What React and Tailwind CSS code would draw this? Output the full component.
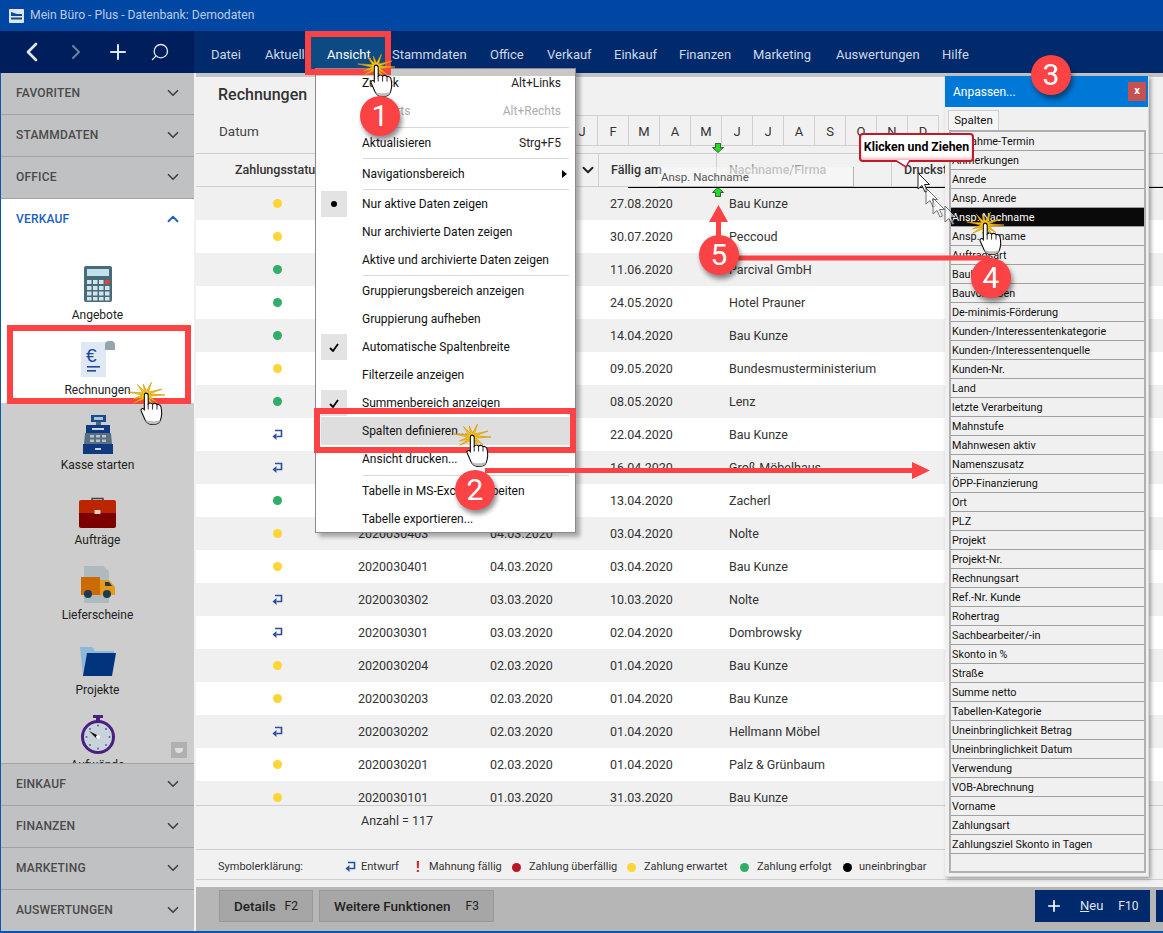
import React from "react";
import { ChevronDown, ChevronUp, ChevronLeft, ChevronRight, Plus, Search } from "lucide-react";

const navItems = [
    { label: "Datei", w: "w-[54px]" },
    { label: "Aktuell", w: "w-[62px]" },
    { label: "Ansicht", w: "w-[65px]", active: true },
    { label: "Stammdaten", w: "w-[98px]" },
    { label: "Office", w: "w-[57px]" },
    { label: "Verkauf", w: "w-[67px]" },
    { label: "Einkauf", w: "w-[65px]" },
    { label: "Finanzen", w: "w-[74px]" },
    { label: "Marketing", w: "w-[83px]" },
    { label: "Auswertungen", w: "w-[106px]" },
    { label: "Hilfe", w: "w-[40px]" },
];

const months = ["J", "F", "M", "A", "M", "J", "J", "A", "S", "O", "N", "D"];

const rows = [
    ["y", "2020080101", "28.07.2020", "27.08.2020", "Bau Kunze"],
    ["y", "2020060201", "30.06.2020", "30.07.2020", "Peccoud"],
    ["g", "2020050201", "12.05.2020", "11.06.2020", "Parcival GmbH"],
    ["g", "2020040701", "24.04.2020", "24.05.2020", "Hotel Prauner"],
    ["g", "2020040601", "15.04.2020", "14.04.2020", "Bau Kunze"],
    ["y", "2020040501", "09.04.2020", "09.05.2020", "Bundesmusterministerium"],
    ["g", "2020040401", "08.04.2020", "08.05.2020", "Lenz"],
    ["d", "2020040301", "23.03.2020", "22.04.2020", "Bau Kunze"],
    ["d", "2020040201", "17.03.2020", "16.04.2020", "Groß Möbelhaus"],
    ["g", "2020040101", "14.03.2020", "13.04.2020", "Zacherl"],
    ["y", "2020030403", "04.03.2020", "03.04.2020", "Nolte"],
    ["y", "2020030401", "04.03.2020", "03.04.2020", "Bau Kunze"],
    ["d", "2020030302", "03.03.2020", "10.03.2020", "Nolte"],
    ["d", "2020030301", "03.03.2020", "02.04.2020", "Dombrowsky"],
    ["y", "2020030204", "02.03.2020", "01.04.2020", "Bau Kunze"],
    ["y", "2020030203", "02.03.2020", "01.04.2020", "Bau Kunze"],
    ["d", "2020030202", "02.03.2020", "01.04.2020", "Hellmann Möbel"],
    ["y", "2020030201", "02.03.2020", "01.04.2020", "Palz & Grünbaum"],
    ["y", "2020030101", "01.03.2020", "31.03.2020", "Bau Kunze"],
];

const columns = [
    "Abnahme-Termin", "Anmerkungen", "Anrede", "Ansp. Anrede", "Ansp. Nachname", "Ansp. Vorname",
    "Auftragsart", "Baubeginn", "Bauvorhaben", "De-minimis-Förderung", "Kunden-/Interessentenkategorie",
    "Kunden-/Interessentenquelle", "Kunden-Nr.", "Land", "letzte Verarbeitung", "Mahnstufe",
    "Mahnwesen aktiv", "Namenszusatz", "ÖPP-Finanzierung", "Ort", "PLZ", "Projekt", "Projekt-Nr.",
    "Rechnungsart", "Ref.-Nr. Kunde", "Rohertrag", "Sachbearbeiter/-in", "Skonto in %", "Straße",
    "Summe netto", "Tabellen-Kategorie", "Uneinbringlichkeit Betrag", "Uneinbringlichkeit Datum",
    "Verwendung", "VOB-Abrechnung", "Vorname", "Zahlungsart", "Zahlungsziel Skonto in Tagen",
];

const Draft = () => (
    <svg width="11" height="12" viewBox="0 0 11 12">
        <path d="M3 1.5h6.5v6H4.5" fill="none" stroke="#2b4f9e" strokeWidth="1.6" />
        <path d="M0.5 7.5L4.5 4v7z" fill="#2b4f9e" />
    </svg>
);

const Dot = ({ color }) => <span className={`block w-[9px] h-[9px] rounded-full ${color}`} />;

const Status = ({ s }) => {
    if (s === "y") return <Dot color="bg-[#fdd535]" />;
    if (s === "g") return <Dot color="bg-[#2fae68]" />;
    return <Draft />;
};

const Calculator = () => (
    <svg width="28" height="36" viewBox="0 0 28 36">
        <rect width="28" height="36" rx="2" fill="#4a6a76" />
        <rect x="3" y="3" width="22" height="7" fill="#bfe0ef" />
        <rect x="3" y="14" width="4.5" height="4" fill="#cfe6f0" />
        <rect x="9" y="14" width="4.5" height="4" fill="#cfe6f0" />
        <rect x="15" y="14" width="4.5" height="4" fill="#cfe6f0" />
        <rect x="21" y="14" width="4.5" height="4" fill="#e8403c" />
        <rect x="3" y="20" width="4.5" height="4" fill="#cfe6f0" />
        <rect x="9" y="20" width="4.5" height="4" fill="#cfe6f0" />
        <rect x="15" y="20" width="4.5" height="4" fill="#cfe6f0" />
        <rect x="21" y="20" width="4.5" height="4" fill="#cfe6f0" />
        <rect x="3" y="25.5" width="4.5" height="4" fill="#cfe6f0" />
        <rect x="9" y="25.5" width="4.5" height="4" fill="#cfe6f0" />
        <rect x="15" y="25.5" width="4.5" height="4" fill="#cfe6f0" />
        <rect x="21" y="25.5" width="4.5" height="4" fill="#cfe6f0" />
        <rect x="3" y="31" width="4.5" height="3.5" fill="#cfe6f0" />
        <rect x="9" y="31" width="4.5" height="3.5" fill="#cfe6f0" />
        <rect x="15" y="31" width="4.5" height="3.5" fill="#cfe6f0" />
        <rect x="21" y="31" width="4.5" height="3.5" fill="#cfe6f0" />
    </svg>
);

const Invoice = () => (
    <svg width="34" height="36" viewBox="0 0 34 36">
        <path d="M0 1h25v35H0z" fill="#dfe8f4" />
        <path d="M24 9V4a4 4 0 0 1 4-4h2a4 4 0 0 1 4 4v5z" fill="#96a4ad" />
        <text x="5" y="21" fontSize="19" fontFamily="Liberation Sans" fill="#1d4a9c">€</text>
        <rect x="6" y="25" width="13" height="1.6" fill="#1d4a9c" />
        <rect x="6" y="29" width="9" height="1.6" fill="#1d4a9c" />
    </svg>
);

const Register = () => (
    <svg width="32" height="39" viewBox="0 0 32 39">
        <rect x="9" y="0" width="15" height="7" fill="#1d4a8c" />
        <rect x="12" y="2" width="9" height="3" fill="#a8c4dc" />
        <rect x="14" y="7" width="5" height="3" fill="#4a6a76" />
        <rect x="4" y="10" width="24" height="8" fill="#0f3a80" />
        <rect x="10" y="13" width="12" height="2" fill="#c8d4e0" />
        <path d="M3 18h26l1 11H2z" fill="#5a6f7d" />
        <rect x="8" y="20" width="4" height="2.5" fill="#b5c4ce" />
        <rect x="14" y="20" width="4" height="2.5" fill="#b5c4ce" />
        <rect x="20" y="20" width="4" height="2.5" fill="#b5c4ce" />
        <rect x="8" y="24.5" width="4" height="2.5" fill="#b5c4ce" />
        <rect x="14" y="24.5" width="4" height="2.5" fill="#b5c4ce" />
        <rect x="20" y="24.5" width="4" height="2.5" fill="#b5c4ce" />
        <rect x="1" y="29" width="30" height="10" fill="#0f3a80" />
        <rect x="13" y="33" width="6" height="2" fill="#c8d4e0" />
    </svg>
);

const Briefcase = () => (
    <svg width="37" height="31" viewBox="0 0 37 31">
        <path d="M13 4V1.5h11V4" fill="none" stroke="#444" strokeWidth="1.5" />
        <path d="M2 3h33a2 2 0 0 1 2 2v11H0V5a2 2 0 0 1 2-2z" fill="#bb2500" />
        <path d="M0 16h37v13a2 2 0 0 1-2 2H2a2 2 0 0 1-2-2z" fill="#7c0000" />
        <rect x="15.5" y="13" width="6" height="4" fill="#e6cfc0" />
    </svg>
);

const Truck = () => (
    <svg width="34" height="37" viewBox="0 0 34 37">
        <path d="M3 0h19l6 5v32H3z" fill="#aebac0" />
        <rect x="0" y="11" width="19" height="18" fill="#cc6a00" />
        <path d="M19 14h9l6 7v8H19z" fill="#e59a1a" />
        <path d="M24 16h4l3 4h-7z" fill="#26384a" />
        <circle cx="7" cy="28" r="4" fill="#1f3a4f" />
        <circle cx="26" cy="28" r="4" fill="#1f3a4f" />
    </svg>
);

const Folder = () => (
    <svg width="36" height="29" viewBox="0 0 36 29">
        <path d="M0 0h12l3 4h19v4H9L4 29H3z" fill="#8db8da" />
        <path d="M7 6h29l-4 23H3z" fill="#00347c" />
    </svg>
);

const Stopwatch = () => (
    <svg width="34" height="39" viewBox="0 0 34 39">
        <rect x="12" y="0" width="10" height="3" fill="#4a1f80" />
        <rect x="15" y="3" width="4" height="3" fill="#4a1f80" />
        <circle cx="17" cy="22" r="15.5" fill="#c8d3dc" stroke="#4a1f80" strokeWidth="3" />
        <g fill="#4f6f80">
            <circle cx="17" cy="10.5" r="1" />
            <circle cx="17" cy="33.5" r="1" />
            <circle cx="5.5" cy="22" r="1" />
            <circle cx="28.5" cy="22" r="1" />
            <circle cx="9" cy="14" r="1" />
            <circle cx="25" cy="14" r="1" />
            <circle cx="9" cy="30" r="1" />
            <circle cx="25" cy="30" r="1" />
        </g>
        <path d="M8 16l10 5-2 3z" fill="#111" />
        <circle cx="17" cy="22" r="2" fill="#fff" />
    </svg>
);

const SideSection = ({ label }) => (
    <div className="h-[42px] shrink-0 flex items-center justify-between pl-[15px] pr-[12px] pb-[2px] bg-[#c0c1c3] border-b border-[#a2a3a5] text-[12px] font-medium tracking-[0.2px] text-[#4a4a4a]">
        <span>{label}</span>
        <ChevronDown size={18} strokeWidth={2.2} className="text-[#404040]" />
    </div>
);

const SideItem = ({ icon, label, extra = "" }) => (
    <div className="h-[75px] flex flex-col items-center">
        <div className={`h-[48px] mt-[7px] flex items-center justify-center ${extra}`}>{icon}</div>
        <div className="text-[12px] leading-[14px] text-[#222]">{label}</div>
    </div>
);

const MenuItem = ({ label, right, mark, disabled, arrow, hot }) => (
    <div className={`h-[28px] flex items-center shrink-0 mx-[5px] pr-[9px] whitespace-nowrap ${hot ? "bg-[#dedede]" : ""} ${disabled ? "text-[#adadad]" : "text-[#111]"}`}>
        <div className="w-[41px] flex justify-start">
            {mark && (
                <div className="w-[26px] h-[26px] bg-[#e3e3e3] flex items-center justify-center">
                    {mark === "dot" ? (
                        <span className="block w-[6px] h-[6px] rounded-full bg-black" />
                    ) : (
                        <svg width="10" height="9" viewBox="0 0 10 9">
                            <path d="M1 5l3 3 5-7" fill="none" stroke="#000" strokeWidth="1.8" />
                        </svg>
                    )}
                </div>
            )}
        </div>
        <span className="flex-1">{label}</span>
        {right && <span className={disabled ? "" : "text-[#222]"}>{right}</span>}
        {arrow && <span className="block border-y-[4px] border-y-transparent border-l-[5px] border-l-black -mr-[6px]" />}
    </div>
);

const MenuSep = ({ h = "h-[3px]" }) => <div className={`${h} shrink-0 flex items-center ml-[47px] mr-[6px]`}><div className="h-px w-full bg-[#d8d8d8]" /></div>;

// little burst that marks a click
const burst = () => {
    const pts = [];
    for (let i = 0; i < 22; i++) {
        const a = (i / 22) * Math.PI * 2;
        const big = i % 2 === 0;
        const rx = big ? (i % 4 === 0 ? 19 : 13) : 4;
        const ry = big ? (i % 4 === 0 ? 11 : 14) : 4;
        pts.push(`${20 + rx * Math.cos(a)},${15 + ry * Math.sin(a)}`);
    }
    return pts.join(" ");
};

const Click = ({ pos }) => (
    <div className={`absolute ${pos}`}>
        <svg width="40" height="30" viewBox="0 0 40 30" className="block">
            <polygon points={burst()} fill="#f6c51c" stroke="#d99a06" strokeWidth="0.7" />
        </svg>
        <svg width="25" height="33" viewBox="0 0 22 30" className="absolute left-[13px] top-[12px]">
            <path d="M6 1C7.5 1 8 2 8 3V11C9 10 11 10 12 11C13 10 15 10 16 11.5C17 11 19 11.5 19.5 13C20.5 17 20.5 22 19 26C18 28.5 16 29.5 12 29.5C8 29.5 6.5 28 5 25L1.5 17C1 15.5 3 14 4.5 16V3C4.5 2 5 1 6 1Z" fill="#fff" stroke="#111" strokeWidth="1" />
            <path d="M5.5 25.5C9 27 15 27 19 25.5C18 28.5 16 29.3 12 29.3C8 29.3 6.5 28 5.5 25.5Z" fill="#bdbdbd" />
            <path d="M8 11V16M12 11V16M16 11.5V16" stroke="#111" strokeWidth="0.8" fill="none" />
        </svg>
    </div>
);

const Badge = ({ n, pos }) => (
    <div className={`absolute ${pos} w-[40px] h-[40px] rounded-full bg-[#fb4245] text-white text-[30px] leading-[40px] text-center font-[family-name:'Liberation_Sans',sans-serif] shadow-[2px_4px_5px_rgba(0,0,0,0.45)]`}>
        {n}
    </div>
);

const Pointer = ({ pos, faded }) => (
    <svg width="14" height="22" viewBox="0 0 14 22" className={`absolute ${pos} ${faded ? "opacity-60" : ""}`}>
        <path d="M1 1V17L5 13.5L8 20L10.5 19L7.5 12.5H12.5Z" fill="#fff" stroke="#222" strokeWidth="1" />
    </svg>
);

const App = () => {
    return (
        <div className="relative w-[1163px] h-[933px] overflow-hidden flex flex-col bg-[#f1f1f1] font-[family-name:Roboto,sans-serif] text-[12.5px] border-b-2 border-[#0a56b0]">

            {/* title bar */}
            <div className="h-[31px] shrink-0 bg-[#0047a4] flex items-center pl-[9px] gap-[6px] text-[12.2px] text-[#b9cbe4]">
                <svg width="15" height="14" viewBox="0 0 15 14">
                    <rect width="15" height="14" rx="1" fill="#dfe5ea" />
                    <path d="M2 3l6 2h5v2H2z" fill="#0a4a9c" />
                    <rect x="2" y="8.5" width="11" height="2" fill="#0a4a9c" />
                </svg>
                <span>Mein Büro - Plus - Datenbank: Demodaten</span>
            </div>

            {/* nav bar */}
            <div className="h-[42px] shrink-0 flex bg-[#002a6c]">
                <div className="w-[194px] shrink-0 bg-[#001e5c] flex items-center text-white">
                    <div className="w-[64px] flex justify-center"><ChevronLeft size={32} strokeWidth={2} className="text-[#dfe6ef]" /></div>
                    <div className="w-[24px] flex justify-center"><ChevronRight size={32} strokeWidth={2} className="text-[#6a80a0]" /></div>
                    <div className="w-[60px] flex justify-center"><Plus size={24} strokeWidth={2} className="text-[#dfe6ef]" /></div>
                    <div className="w-[24px] flex justify-center"><Search size={20} strokeWidth={1.6} className="-scale-x-100 text-[#dfe6ef]" /></div>
                </div>
                <div className="flex pl-[17px] pt-[4px] text-[13px]">
                    {navItems.map((n) => (
                        <div key={n.label} className={`${n.w} h-[38px] relative flex items-center ${n.active ? "text-white" : "text-[#cdd8e6]"}`}>
                            {n.active && <span className="absolute -left-[16px] top-0 w-[74px] h-[38px] bg-[#0d4a84]" />}
                            <span className="relative pt-[2px]">{n.label}</span>
                            {n.active && <span className="absolute -left-[12px] w-[58px] bottom-[3px] h-[2px] bg-white" />}
                        </div>
                    ))}
                </div>
            </div>

            <div className="flex-1 min-h-0 flex">

                {/* sidebar */}
                <div className="w-[194px] shrink-0 flex flex-col bg-[#cdcdcd] border-l border-[#0a56b0]">
                    <SideSection label="FAVORITEN" />
                    <SideSection label="STAMMDATEN" />
                    <SideSection label="OFFICE" />
                    <div className="h-[42px] shrink-0 flex items-center justify-between pl-[15px] pr-[12px] pb-[2px] bg-white text-[12px] font-medium tracking-[0.2px] text-[#2060c0]">
                        <span>VERKAUF</span>
                        <ChevronUp size={18} strokeWidth={2.4} className="text-[#2060c0]" />
                    </div>
                    <div className="relative h-[522px] shrink-0 overflow-hidden">
                        <div className="bg-white pt-[12px]">
                            <SideItem icon={<Calculator />} label="Angebote" />
                            <SideItem icon={<Invoice />} label="Rechnungen" />
                        </div>
                        <SideItem icon={<Register />} label="Kasse starten" extra="-mt-px" />
                        <SideItem icon={<Briefcase />} label="Aufträge" extra="pt-[6px]" />
                        <SideItem icon={<Truck />} label="Lieferscheine" />
                        <SideItem icon={<Folder />} label="Projekte" extra="pt-[4px]" />
                        <SideItem icon={<Stopwatch />} label="Aufwände" />
                        <div className="absolute left-[170px] top-[501px] w-[16px] h-[16px] bg-[#b0b0b0] flex items-center justify-center">
                            <span className="block w-[8px] h-[5px] bg-[#dedede] rounded-b-full" />
                        </div>
                    </div>
                    <div className="border-t border-[#a2a3a5]">
                        <SideSection label="EINKAUF" />
                        <SideSection label="FINANZEN" />
                        <SideSection label="MARKETING" />
                        <SideSection label="AUSWERTUNGEN" />
                    </div>
                </div>

                {/* main */}
                <div className="flex-1 min-w-0 ml-[2px] flex flex-col text-[#333]">
                    <div className="h-[4px] shrink-0 bg-[#c4c4c4]" />
                    <div className="h-[38px] shrink-0 flex items-center pl-[22px] pb-[2px] text-[16px] font-medium text-[#333]">Rechnungen</div>
                    <div className="h-[31px] shrink-0 flex items-center">
                        <div className="w-[371px] pl-[23px] pt-px text-[13.5px] text-[#444]">Datum</div>
                        <div className="flex border-y border-[#cfcfcf] h-full text-[13px]">
                            {months.map((m, i) => (
                                <div key={i} className="w-[31px] pt-[2px] flex items-center justify-center border-r border-[#cfcfcf]">{m}</div>
                            ))}
                        </div>
                    </div>
                    <div className="h-[7px] shrink-0" />

                    {/* table header */}
                    <div className="h-[34px] shrink-0 flex items-center border-t border-[#cfcfcf] border-b font-medium">
                        <div className="w-[402px] pl-[39px] pr-[1px] flex items-center justify-between">
                            <span>Zahlungsstatus</span>
                            <ChevronDown size={18} strokeWidth={2.6} className="text-[#222]" />
                        </div>
                        <div className="w-[119px] h-full flex items-center pl-[12px] border-x border-[#cfcfcf]">Fällig am</div>
                        <div className="w-[175px] h-full flex items-center pl-[12px] border-r border-[#cfcfcf] text-[#9b9b9b]">Nachname/Firma</div>
                        <div className="pl-[12px]">Druckstatus</div>
                    </div>

                    {/* rows */}
                    <div className="h-[618px] shrink-0 overflow-hidden">
                        {rows.map((r, i) => (
                            <div key={r[1]} className={`h-[33px] flex items-center ${i % 2 === 0 ? "bg-[#f0f0f0]" : "bg-white"}`}>
                                <div className="w-[162px] flex justify-center pl-px"><Status s={r[0]} /></div>
                                <div className="w-[132px] pt-[2px]">{r[1]}</div>
                                <div className="w-[120px] pt-[2px]">{r[2]}</div>
                                <div className="w-[119px] pt-[2px]">{r[3]}</div>
                                <div className="flex-1 pt-[2px]">{r[4]}</div>
                            </div>
                        ))}
                    </div>

                    <div className="h-[45px] shrink-0 border-y border-[#cfcfcf] pl-[165px] pt-[6px]">Anzahl = 117</div>

                    {/* legend */}
                    <div className="h-[30px] shrink-0 flex items-center pl-[22px] pt-[5px] border-b border-[#cfcfcf] text-[11px] text-[#333]">
                        <span className="w-[127px]">Symbolerklärung:</span>
                        <span className="w-[16px]"><Draft /></span>
                        <span className="w-[55px]">Entwurf</span>
                        <span className="w-[13px] font-bold text-[#c0182a] text-[14px]">!</span>
                        <span className="w-[83px]">Mahnung fällig</span>
                        <span className="w-[17px]"><Dot color="bg-[#b81525]" /></span>
                        <span className="w-[98px]">Zahlung überfällig</span>
                        <span className="w-[17px]"><Dot color="bg-[#fdd535]" /></span>
                        <span className="w-[96px]">Zahlung erwartet</span>
                        <span className="w-[17px]"><Dot color="bg-[#2fae68]" /></span>
                        <span className="w-[86px]">Zahlung erfolgt</span>
                        <span className="w-[16px]"><Dot color="bg-black" /></span>
                        <span>uneinbringbar</span>
                    </div>

                    <div className="h-[7px] shrink-0" />

                    {/* bottom bar */}
                    <div className="flex-1 min-h-0 bg-[#b6b6b6] flex items-start pt-[3px] pl-[23px] font-medium text-[13.5px] text-[#222]">
                        <div className="w-[94px] h-[32px] bg-[#a6a6a6] border border-[#999] flex items-center justify-between px-[14px]">
                            <span>Details</span><span className="font-normal text-[12px]">F2</span>
                        </div>
                        <div className="w-[175px] h-[32px] ml-[6px] bg-[#a6a6a6] border border-[#999] flex items-center justify-between px-[14px]">
                            <span>Weitere Funktionen</span><span className="font-normal text-[12px]">F3</span>
                        </div>
                        <div className="w-[115px] h-[32px] ml-auto bg-[#002a6c] text-[#dfe6ef] flex items-center pl-[10px] font-normal text-[13px]">
                            <Plus size={18} strokeWidth={2.2} className="text-white" />
                            <span className="ml-[17px]"><span className="underline">N</span>eu</span>
                            <span className="ml-[15px] text-[12px]">F10</span>
                        </div>
                        <div className="w-[7px] h-[32px] ml-[6px] bg-[#002a6c]" />
                    </div>
                </div>
            </div>

            {/* drag feedback over the table header */}
            <div className="absolute left-[628px] top-[187px] w-[535px] h-px bg-black" />
            <div className="absolute left-[658px] top-[167px] w-[196px] h-[20px] bg-white/40 border-r border-b border-[#b5b5b5] pl-[3px] leading-[20px] text-[11.5px] text-[#555]">Ansp. Nachname</div>
            <svg width="12" height="10" viewBox="0 0 12 10" className="absolute left-[712px] top-[143px]">
                <path d="M3.5 0.5h5v4h3L6 9.5 0.5 4.5h3z" fill="#1fe01f" stroke="#222" strokeWidth="0.7" />
            </svg>
            <svg width="12" height="10" viewBox="0 0 12 10" className="absolute left-[712px] top-[187px]">
                <path d="M3.5 9.5h5v-4h3L6 0.5 0.5 5.5h3z" fill="#1fe01f" stroke="#222" strokeWidth="0.7" />
            </svg>

            {/* Ansicht menu */}
            <div className="absolute left-[315px] top-[68px] w-[261px] h-[465px] bg-white border border-[#8f878f] shadow-[4px_4px_4px_rgba(0,0,0,0.3)] flex flex-col text-[12px]">
                <div className="absolute left-0 right-0 top-0 h-[7px] bg-[#c8c8c8]" />
                <MenuItem label="Zurück" right="Alt+Links" />
                <MenuItem label="Vorwärts" right="Alt+Rechts" disabled />
                <MenuSep h="h-[4px]" />
                <MenuItem label="Aktualisieren" right="Strg+F5" />
                <MenuSep />
                <MenuItem label="Navigationsbereich" arrow />
                <MenuSep h="h-[2px]" />
                <MenuItem label="Nur aktive Daten zeigen" mark="dot" />
                <MenuItem label="Nur archivierte Daten zeigen" />
                <MenuItem label="Aktive und archivierte Daten zeigen" />
                <MenuSep />
                <MenuItem label="Gruppierungsbereich anzeigen" />
                <MenuItem label="Gruppierung aufheben" />
                <MenuItem label="Automatische Spaltenbreite" mark="check" />
                <MenuItem label="Filterzeile anzeigen" />
                <MenuItem label="Summenbereich anzeigen" mark="check" />
                <MenuItem label="Spalten definieren..." hot />
                <MenuItem label="Ansicht drucken..." />
                <MenuSep h="h-[4px]" />
                <MenuItem label="Tabelle in MS-Excel bearbeiten" />
                <MenuItem label="Tabelle exportieren..." />
            </div>

            {/* Anpassen dialog */}
            <div className="absolute left-[945px] top-[76px] w-[204px] h-[801px] bg-[#f0f0f0] border-r border-b border-[#d8d8d8] shadow-[2px_2px_4px_rgba(0,0,0,0.35)] flex flex-col text-[10.8px] text-[#111]">
                <div className="h-[31px] shrink-0 bg-[#0078d7] flex items-center justify-between pl-[8px] pr-[2px] text-[12px] text-white">
                    <span>Anpassen...</span>
                    <span className="w-[18px] h-[19px] bg-[#c75050] text-[11px] font-bold leading-[18px] text-center">x</span>
                </div>
                <div className="h-[23px] shrink-0 pt-[3px] pl-[3px] text-[11.5px]">
                    <div className="w-[51px] h-[20px] bg-[#f5f5f5] border border-b-0 border-[#cfcfcf] text-center leading-[19px]">Spalten</div>
                </div>
                <div className="flex-1 min-h-0 ml-[4px] mr-[2px] mb-[3px] border-2 border-[#b0b0b0] bg-[#f0f0f0]">
                    {columns.map((c) => (
                        <div key={c} className={`h-[19px] pl-px border-b border-[#a0a0a0] leading-[20px] ${c === "Ansp. Nachname" ? "bg-[#0a0a0a] text-white" : ""}`}>{c}</div>
                    ))}
                </div>
            </div>

            {/* callout */}
            <div className="absolute left-[859px] top-[133px] w-[115px] h-[29px] bg-white border-2 border-[#c01a2a] rounded-[4px] shadow-[inset_0_-2px_3px_rgba(200,30,40,0.3)] text-[12.3px] font-bold leading-[25px] text-center text-black font-[family-name:'Liberation_Sans',sans-serif] whitespace-nowrap">Klicken und Ziehen</div>
            <svg width="16" height="8" viewBox="0 0 16 8" className="absolute left-[895px] top-[160px]">
                <path d="M0 0L11 7L15 0" fill="#fff" stroke="#c01a2a" strokeWidth="1.5" />
            </svg>

            <Pointer pos="left-[917px] top-[172px]" />
            <Pointer pos="left-[925px] top-[187px]" faded />
            <Pointer pos="left-[932px] top-[197px]" faded />
            <Pointer pos="left-[944px] top-[205px]" faded />

            {/* red annotations */}
            <div className="absolute left-[305px] top-[31px] w-[86px] h-[44px] border-[6px] border-[#fb4245]" />
            <div className="absolute left-[7px] top-[325px] w-[184px] h-[79px] border-[6px] border-[#fb4245]" />
            <div className="absolute left-[314px] top-[408px] w-[262px] h-[45px] border-[6px] border-[#fb4245]" />
            <svg width="1163" height="933" viewBox="0 0 1163 933" className="absolute left-0 top-0 pointer-events-none">
                <rect x="485" y="468" width="430" height="5" fill="#fb4245" />
                <polygon points="912,462 930,470.5 912,479" fill="#fb4245" />
                <rect x="730" y="255.5" width="260" height="5" fill="#fb4245" />
                <rect x="716" y="218" width="5" height="24" fill="#fb4245" />
                <polygon points="709,222 718.5,205 728,222" fill="#fb4245" />
            </svg>

            <Click pos="left-[356px] top-[52px]" />
            <Click pos="left-[126px] top-[380px]" />
            <Click pos="left-[452px] top-[422px]" />
            <Click pos="left-[965px] top-[210px]" />

            <Badge n="1" pos="left-[360px] top-[96px]" />
            <Badge n="2" pos="left-[455px] top-[470px]" />
            <Badge n="3" pos="left-[1031px] top-[55px]" />
            <Badge n="4" pos="left-[971px] top-[258px]" />
            <Badge n="5" pos="left-[699px] top-[235px]" />
        </div>
    );
};

export default App;
